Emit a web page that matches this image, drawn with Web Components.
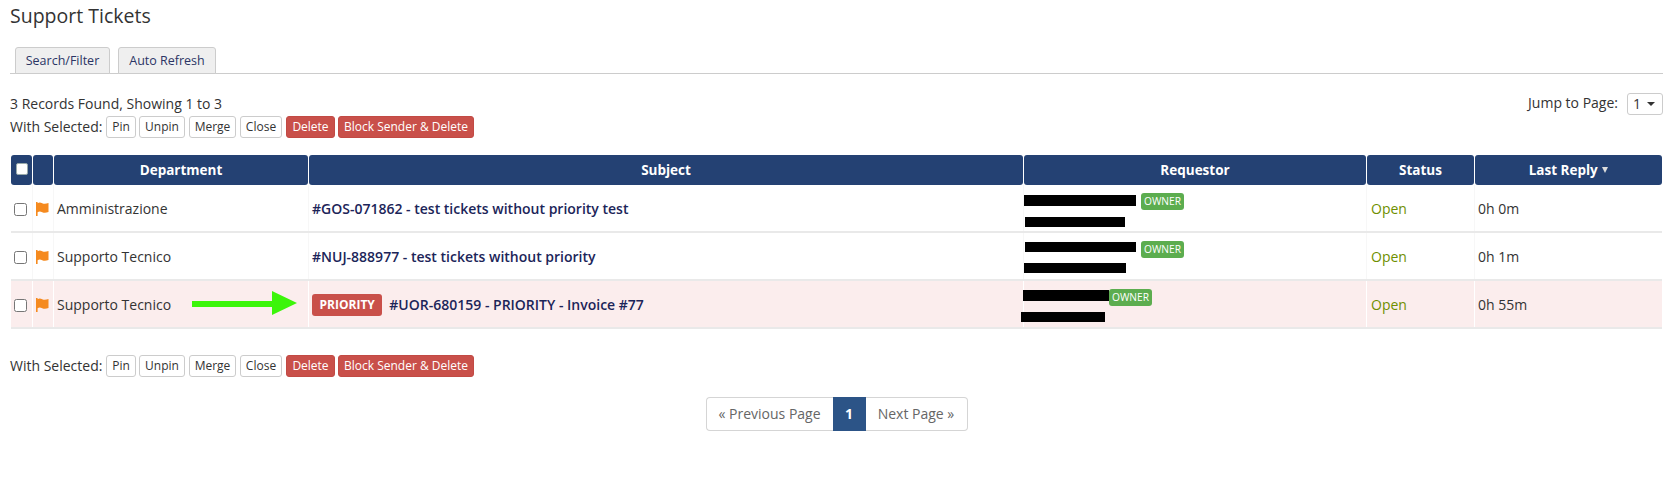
<!DOCTYPE html>
<html><head><meta charset="utf-8"><style>
html,body{margin:0;background:#fff}
body{font:14px/1.43 "Open Sans",sans-serif;color:#333;width:1671px;height:481px;overflow:hidden}
</style></head><body>
<support-page></support-page>
<script>
const FLAG='<svg width="15" height="16" viewBox="0 0 15 16"><path d="M1 1h1.600v1.200c1.600-.9 3-.7 4.600 0 1.900.8 3.500.7 6.300-.2v9c-2.500 1-4.500 1-6.300.2-1.600-.7-3-.9-4.600 0V15H1z" fill="#f58a1f"/></svg>';
class BulkActions extends HTMLElement{constructor(){super();this.attachShadow({mode:'open'}).innerHTML=`<style>
:host{display:flex;align-items:center;height:22px;font-size:14px}
span{width:96px;white-space:nowrap;color:#333}
b{font-weight:400;display:block;box-sizing:border-box;height:22px;line-height:20px;text-align:center;border:1px solid #ccc;border-radius:3px;background:#fff;color:#333;font-size:12px;flex:none}
b.d{background:#c9504a;border-color:#c24a44;color:#fff}
</style><span>With Selected:</span><b style="width:30px;margin-right:3px">Pin</b><b style="width:46px;margin-right:4px">Unpin</b><b style="width:47px;margin-right:4px">Merge</b><b style="width:42px;margin-right:4px">Close</b><b class="d" style="width:49px;margin-right:3px">Delete</b><b class="d" style="width:136px">Block Sender &amp; Delete</b>`}}
customElements.define('bulk-actions',BulkActions);

class TabBar extends HTMLElement{constructor(){super();this.attachShadow({mode:'open'}).innerHTML=`<style>
:host{display:flex;gap:8px;padding-left:5px;border-bottom:1px solid #ccc;height:26px}
div{box-sizing:border-box;height:27px;line-height:26px;text-align:center;border:1px solid #ccc;border-radius:3px 3px 0 0;background:#efefef;color:#2b3565;font-size:12.500px}
</style><div style="width:95px">Search/Filter</div><div style="width:98px">Auto Refresh</div>`}}
customElements.define('tab-bar',TabBar);

class PagerNav extends HTMLElement{constructor(){super();this.attachShadow({mode:'open'}).innerHTML=`<style>
:host{display:flex;justify-content:center;height:34px;font-size:14px}
nav{display:flex}
a{box-sizing:border-box;height:34px;line-height:32px;border:1px solid #d5d5d5;color:#666;background:#fff;text-align:center}
a:first-child{width:127px;border-radius:4px 0 0 4px;border-right:0}
a.on{width:33px;background:#2c5487;border-color:#2c5487;color:#fff;font-weight:700}
a:last-child{width:102px;border-radius:0 4px 4px 0;border-left:0}
</style><nav><a>« Previous Page</a><a class="on">1</a><a>Next Page »</a></nav>`}}
customElements.define('pager-nav',PagerNav);

class TicketRow extends HTMLElement{
 connectedCallback(){ if(this.shadowRoot)return;
  const a=n=>this.getAttribute(n)||'';
  const b=a('bars').split(',').map(Number);
  this.attachShadow({mode:'open'}).innerHTML=`<style>
:host{display:grid;grid-template-columns:var(--cols);column-gap:1px;height:48px;background:${a('hl')?'#fbeded':'#fff'};border-bottom:2px solid #e9e9e9;box-sizing:border-box;font-size:14px}
.c{display:flex;align-items:center;padding:2px 3px 0;position:relative;min-width:0;white-space:nowrap}
.sep{box-shadow:1px 0 0 ${a('hl')?'#fff':'#f7f7f7'}}
i{display:block;box-sizing:border-box;width:13px;height:13px;border:1px solid #767676;border-radius:2.500px;background:#fff}
.fl{padding-left:2px}
.fl svg{display:block}
.s{color:#1c2559;font-weight:600}
.p{display:inline-block;background:#c9504a;color:#fff;font-weight:700;font-size:12px;line-height:22px;height:22px;padding:0 7.500px;border-radius:3px;margin-right:7px}
.own{position:absolute;left:${b[4]}px;top:8px;background:#5cad4f;color:#fff;font-size:10.200px;line-height:17px;height:17px;padding:0 3px;border-radius:3px}
.bar{position:absolute;background:#000}
.open{color:#6f8f00;padding-left:4px}
.t{padding-left:3px;color:#333}
.arrow{position:absolute;left:138px;top:10px}
</style>
<div class="c sep"><i></i></div>
<div class="c sep fl">${FLAG}</div>
<div class="c sep">${a('dept')}${a('hl')?'<svg class="arrow" width="106" height="24" viewBox="0 0 106 24"><path d="M0 10h80V0l25 12-25 12V16H0z" fill="#3cf50a"/></svg>':''}</div>
<div class="c sep s">${a('hl')?'<span class="p">PRIORITY</span>':''}<slot></slot></div>
<div class="c sep"><div class="bar" style="left:${b[0]}px;top:${b[1]}px;width:${b[2]}px;height:${b[3]}px"></div><span class="own">OWNER</span><div class="bar" style="left:${b[5]}px;top:${b[6]}px;width:${b[7]}px;height:10px"></div></div>
<div class="c sep open">Open</div>
<div class="c t">${a('age')}</div>`}
}
customElements.define('ticket-row',TicketRow);

class TicketTable extends HTMLElement{constructor(){super();this.attachShadow({mode:'open'}).innerHTML=`<style>
:host{display:block;--cols:21px 20px 254px 714px 342px 107px 187px}
.h{display:grid;grid-template-columns:var(--cols);column-gap:1px;height:30px}
.h div{background:#244173;color:#fff;font-weight:700;font-size:13.500px;line-height:30px;text-align:center;border-radius:3px}
.h i{display:block;width:12px;height:12px;margin:8px auto 0;background:#fff;border-radius:2px;border:1px solid #9aa;box-sizing:border-box}
.tri{display:inline-block;border:solid transparent;border-width:6px 3.500px 0;border-top-color:#ddd;vertical-align:2px;margin-left:1px}
</style><div class="h"><div><i></i></div><div></div><div>Department</div><div>Subject</div><div>Requestor</div><div>Status</div><div>Last Reply <span class="tri"></span></div></div><slot></slot>`}}
customElements.define('ticket-table',TicketTable);

class SupportPage extends HTMLElement{constructor(){super();this.attachShadow({mode:'open'}).innerHTML=`<style>
:host{display:block;padding:0 8px 0 10px;box-sizing:border-box;width:1671px}
h1{margin:0;font-size:19.500px;font-weight:400;line-height:26px;padding-top:3px;color:#333}
tab-bar{margin-top:18px}
.rec{display:flex;justify-content:space-between;margin-top:19px;height:22px;align-items:center}
.jump{display:flex;align-items:center;gap:9px;margin-top:-1px}
.sel{box-sizing:border-box;width:36px;height:22px;border:1px solid #ccc;border-radius:3px;padding-left:5px;line-height:20px;position:relative}
.sel::after{content:"";position:absolute;right:7px;top:8px;border:4px solid transparent;border-top-color:#333;border-bottom:0}
bulk-actions.a{margin-top:1px}
ticket-table{margin:17px 1px 0 1px}
bulk-actions.b{margin-top:26px}
pager-nav{margin-top:20px}
</style><h1>Support Tickets</h1><tab-bar></tab-bar>
<div class="rec"><span>3 Records Found, Showing 1 to 3</span><div class="jump"><span>Jump to Page:</span><div class="sel">1</div></div></div>
<bulk-actions class="a"></bulk-actions>
<ticket-table>
<ticket-row dept="Amministrazione" age="0h 0m" bars="0,10,112,11,117,1,32,100">#GOS-071862 - test tickets without priority test</ticket-row>
<ticket-row dept="Supporto Tecnico" age="0h 1m" bars="1,9,111,10,117,0,30,102">#NUJ-888977 - test tickets without priority</ticket-row>
<ticket-row hl="1" dept="Supporto Tecnico" age="0h 55m" bars="-1,9,86,11,85,-3,31,84">#UOR-680159 - PRIORITY - Invoice #77</ticket-row>
</ticket-table>
<bulk-actions class="b"></bulk-actions>
<pager-nav></pager-nav>`}}
customElements.define('support-page',SupportPage);
</script></body></html>
